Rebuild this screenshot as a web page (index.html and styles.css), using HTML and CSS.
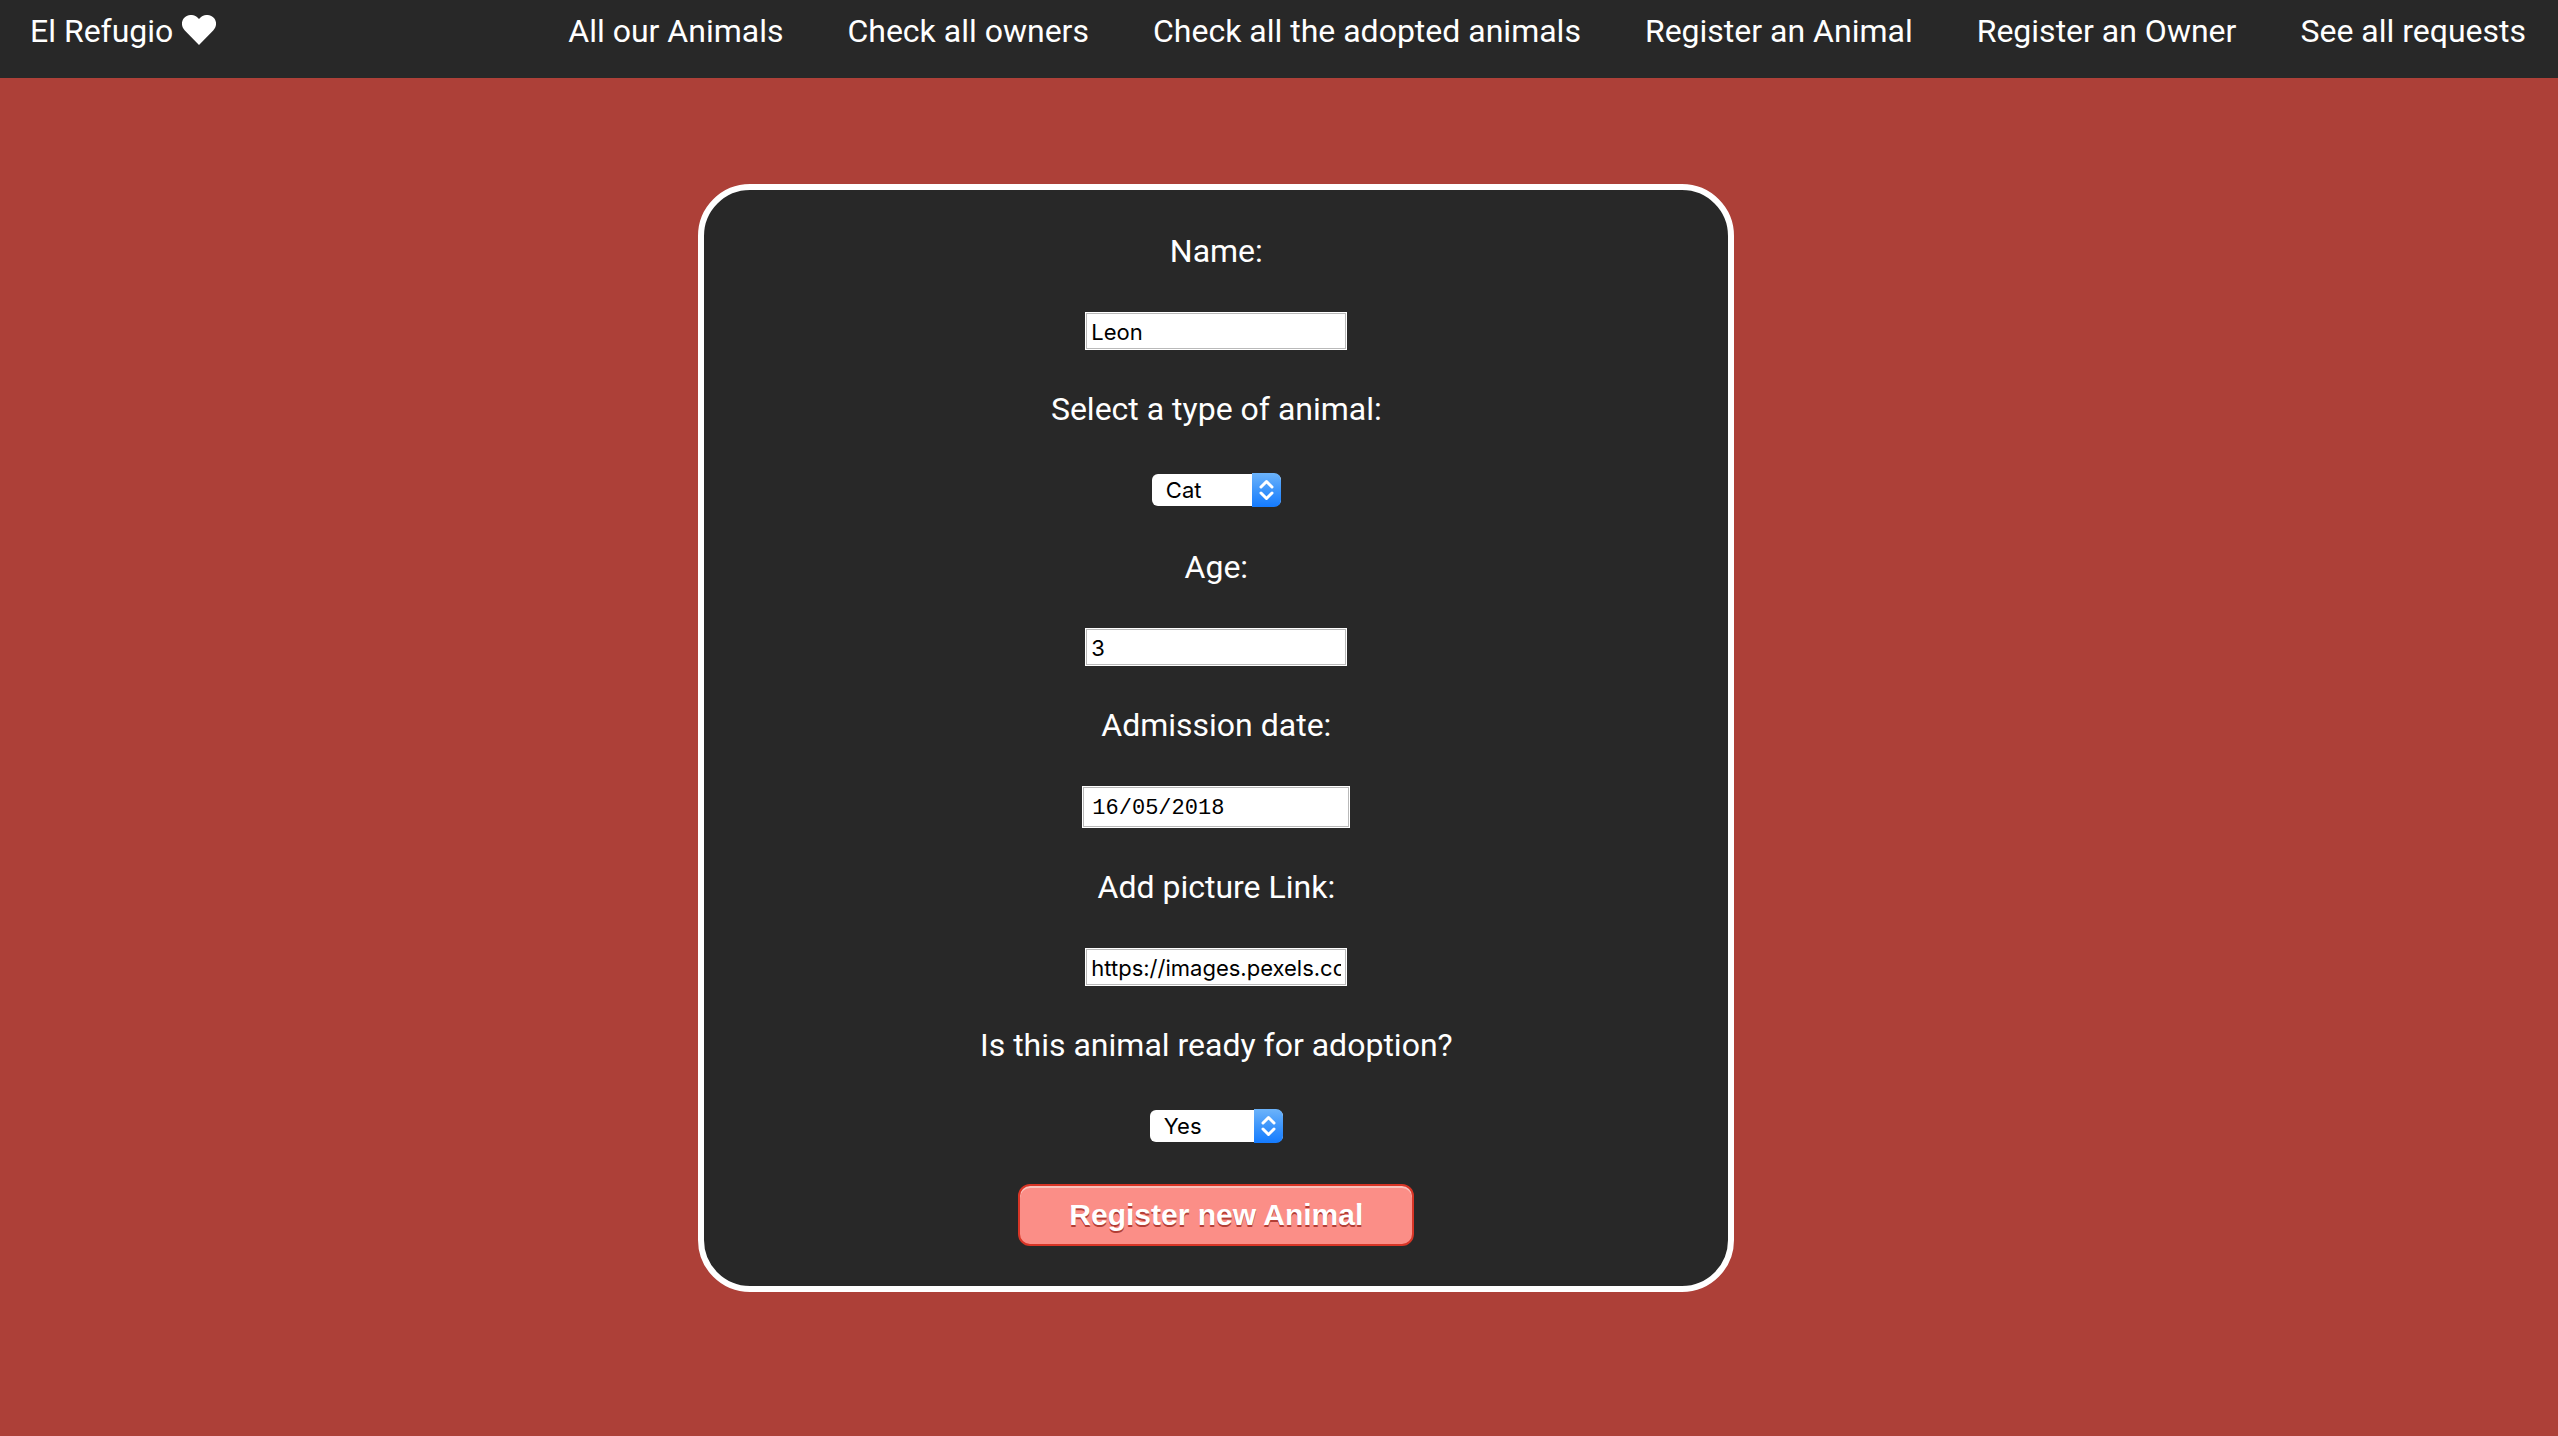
FILE: index.html
```html
<!DOCTYPE html>
<html lang="en">
<head>
<meta charset="utf-8">
<title>El Refugio</title>
<link rel="stylesheet" href="styles.css">
</head>
<body>
<header class="navbar">
  <a class="brand" href="#">El Refugio
    <svg class="heart" viewBox="0 0 34 30" aria-hidden="true"><path d="M17 30L2.800 15.500C-1 11.500-1 6 2.600 2.600C6.300-1 12-.8 15.500 2.500L17 4.100L18.500 2.500C22-.8 27.700-1 31.400 2.600C35 6 35 11.500 31.200 15.500Z"/></svg>
  </a>
  <nav class="links">
    <a href="#">All our Animals</a>
    <a href="#">Check all owners</a>
    <a href="#">Check all the adopted animals</a>
    <a href="#">Register an Animal</a>
    <a href="#">Register an Owner</a>
    <a href="#">See all requests</a>
  </nav>
</header>
<main>
  <form class="card">
    <div class="field">
      <label for="name">Name:</label>
      <input class="text" id="name" type="text" value="Leon">
    </div>
    <div class="field">
      <label for="type">Select a type of animal:</label>
      <span class="picker picker-type">
        <select id="type"><option>Cat</option><option>Dog</option></select>
        <svg class="arrows" viewBox="0 0 29 34" aria-hidden="true"><path d="M9 14L14.500 8.500L20 14M9 20L14.500 25.500L20 20"/></svg>
      </span>
    </div>
    <div class="field">
      <label for="age">Age:</label>
      <input class="text" id="age" type="text" value="3">
    </div>
    <div class="field">
      <label for="date">Admission date:</label>
      <input class="text date" id="date" type="text" value="16/05/2018">
    </div>
    <div class="field">
      <label for="picture">Add picture Link:</label>
      <input class="text" id="picture" type="text" value="https://images.pexels.com/photos">
    </div>
    <div class="field">
      <label for="ready">Is this animal ready for adoption?</label>
      <span class="picker picker-ready">
        <select id="ready"><option>Yes</option><option>No</option></select>
        <svg class="arrows" viewBox="0 0 29 34" aria-hidden="true"><path d="M9 14L14.500 8.500L20 14M9 20L14.500 25.500L20 20"/></svg>
      </span>
    </div>
    <button class="submit" type="submit">Register new Animal</button>
  </form>
</main>
</body>
</html>
```
FILE: styles.css
```css
* { box-sizing: border-box; }

body {
  margin: 0;
  min-height: 100vh;
  background: #ad4038;
  color: #fff;
  font-family: Roboto, sans-serif;
  font-size: 32px;
  line-height: 40px;
}

.navbar {
  display: flex;
  justify-content: space-between;
  height: 78px;
  padding: 11px 32px 0 30px;
  background: #282828;
}

.navbar a { color: #fff; text-decoration: none; }

.brand { display: flex; gap: 9px; }

.heart { width: 34px; height: 30px; margin-top: 4px; fill: #fff; }

.links { display: flex; gap: 64px; }

.card {
  display: flex;
  flex-direction: column;
  align-items: center;
  gap: 39px;
  margin: 106px 32.2% 0 27.3%;
  padding: 41px 40px 40px;
  background: #282828;
  border: 6px solid #fff;
  border-radius: 52px;
}

.field {
  display: flex;
  flex-direction: column;
  align-items: center;
  gap: 41px;
}

.text {
  width: 262px;
  height: 38px;
  padding: 2px 5px 0;
  color: #000;
  background: #fff;
  border: 1px solid #fff;
  outline: 1px solid #b9b9b9;
  outline-offset: -2px;
  font: 22px Inter, sans-serif;
}

.date {
  width: 268px;
  height: 42px;
  padding: 2px 9px 0;
  font-family: "Liberation Mono", monospace;
}

.picker {
  position: relative;
  display: flex;
  height: 34px;
  margin: 3px 0 1px;
  padding: 1px 0;
}

.picker-type { width: 129px; }
.picker-ready { width: 133px; }

.picker select {
  appearance: none;
  width: 100%;
  height: 32px;
  padding: 0 32px 0 14px;
  color: #000;
  background: #fff;
  border: 0;
  border-radius: 6px;
  font: 22px Inter, sans-serif;
}

.arrows {
  position: absolute;
  top: 0;
  right: 0;
  width: 29px;
  height: 34px;
  background: linear-gradient(#6cb3fa, #3e96fb 50%, #147bff);
  border-radius: 0 7px 7px 0;
  fill: none;
  stroke: #fff;
  stroke-width: 3;
  stroke-linecap: round;
  stroke-linejoin: round;
  pointer-events: none;
}

.submit {
  width: 396px;
  height: 62px;
  margin-top: 1px;
  padding: 0;
  color: #fff;
  background: #fb8e87;
  border: 2px solid #d83526;
  border-radius: 12px;
  box-shadow: inset 0 2px 0 #f9c2bd;
  font: bold 30px "Liberation Sans", sans-serif;
  text-shadow: 0 2px 0 #b23e35;
}
```
